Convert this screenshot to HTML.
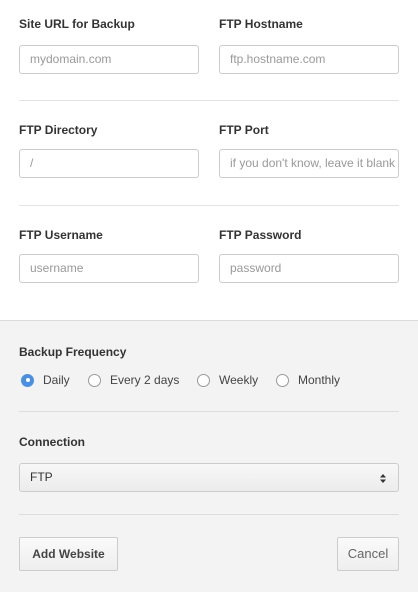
<!DOCTYPE html><html><head><style>
body{margin:0;width:418px;height:591px;background:#fff;font-family:"Liberation Sans",sans-serif;position:relative;overflow:hidden}
.a{position:absolute}
.lbl{font-size:12px;font-weight:bold;color:#333}
.inp{height:29px;border:1px solid #ccc;border-radius:3px;box-sizing:border-box;font-size:12px;color:#999;padding:0 10px;line-height:27px;white-space:nowrap;overflow:hidden;background:#fff}
.hr{height:1px;background:#e3e3e3;left:19px;width:380px}
.gray{left:0;top:320px;width:418px;height:271px;background:#f3f3f3;border-top:1px solid #dcdcdc}
.r{font-size:12px;color:#444;display:flex;align-items:center}
.rc{width:13px;height:13px;border:1px solid #999;border-radius:50%;background:#fff;margin-right:9px;box-sizing:border-box}
.btn{border:1px solid #ccc;border-radius:2px;box-sizing:border-box;background:linear-gradient(#fafafa,#eee);font-size:12px;text-align:center;line-height:32px}
</style></head><body>
<div class="a lbl" style="left:19px;top:17px">Site URL for Backup</div>
<div class="a lbl" style="left:219px;top:17px">FTP Hostname</div>
<div class="a inp" style="left:19px;top:45px;width:180px">mydomain.com</div>
<div class="a inp" style="left:219px;top:45px;width:180px">ftp.hostname.com</div>
<div class="a hr" style="top:100px"></div>
<div class="a lbl" style="left:19px;top:123px">FTP Directory</div>
<div class="a lbl" style="left:219px;top:123px">FTP Port</div>
<div class="a inp" style="left:19px;top:149px;width:180px">/</div>
<div class="a inp" style="left:219px;top:149px;width:180px">if you don't know, leave it blank</div>
<div class="a hr" style="top:205px"></div>
<div class="a lbl" style="left:19px;top:228px">FTP Username</div>
<div class="a lbl" style="left:219px;top:228px">FTP Password</div>
<div class="a inp" style="left:19px;top:254px;width:180px">username</div>
<div class="a inp" style="left:219px;top:254px;width:180px">password</div>
<div class="a gray"></div>
<div class="a lbl" style="left:19px;top:345px">Backup Frequency</div>
<div class="a" style="left:21px;top:373px;display:flex;gap:0">
<div class="r" style="width:67px"><span class="rc" style="background:#4a90e2;border-color:#4a90e2;display:flex;align-items:center;justify-content:center"><span style="width:4px;height:4px;background:#fff;border-radius:50%"></span></span>Daily</div>
<div class="r" style="width:109px"><span class="rc"></span>Every 2 days</div>
<div class="r" style="width:79px"><span class="rc"></span>Weekly</div>
<div class="r"><span class="rc"></span>Monthly</div>
</div>
<div class="a hr" style="top:411px;background:#ddd"></div>
<div class="a lbl" style="left:19px;top:435px">Connection</div>
<div class="a inp" style="left:19px;top:463px;width:380px;color:#333;background:linear-gradient(#f7f7f7,#ececec)">FTP<svg style="position:absolute;right:12px;top:10px" width="6" height="9" viewBox="0 0 6 9"><path d="M0 3.5L3 0L6 3.5ZM0 5.5L3 9L6 5.5Z" fill="#333"/></svg></div>
<div class="a hr" style="top:514px;background:#ddd"></div>
<div class="a btn" style="left:19px;top:537px;width:99px;height:34px;font-weight:bold;color:#444">Add Website</div>
<div class="a btn" style="left:337px;top:537px;width:62px;height:34px;color:#666;font-size:13px">Cancel</div>
</body></html>
